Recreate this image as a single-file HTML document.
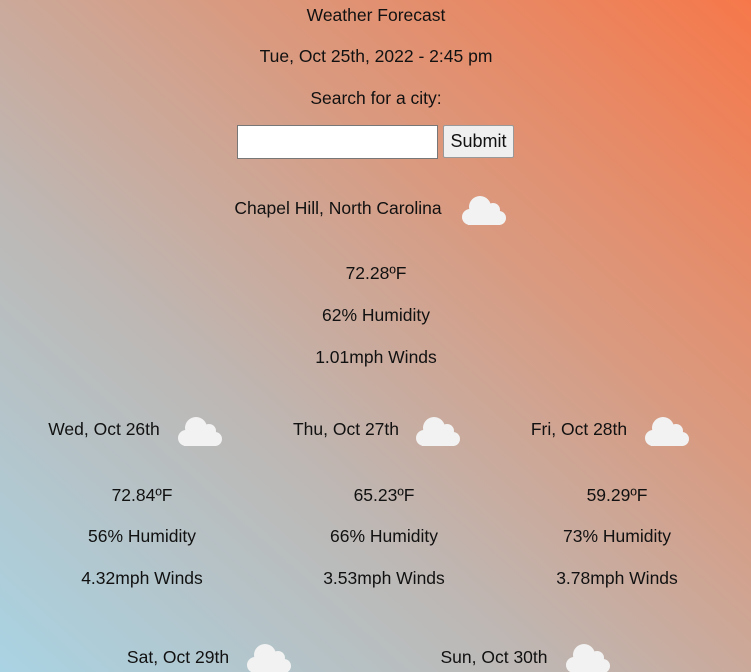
<!DOCTYPE html>
<html><head><style>
html,body{margin:0;padding:0;width:751px;height:672px;overflow:hidden}
body{background:linear-gradient(to top right,#a9d3e3 0%,#bdb8b5 35%,#d99a80 65%,#f6784a 100%);font-family:"Liberation Sans",sans-serif;font-size:17.5px;color:#111;position:relative}
.t{position:absolute;white-space:nowrap;transform:translateX(-50%)}
.c{position:absolute}
input{position:absolute;left:237px;top:125px;width:201px;height:34px;border:1px solid #777;background:#fff;padding:0;margin:0;box-sizing:border-box}
button{position:absolute;left:443px;top:125px;width:71px;height:33px;border:1px solid #999;border-radius:2px;background:#efefef;font-family:"Liberation Sans",sans-serif;font-size:18px;padding:0;color:#111}
</style></head><body>
<svg width="0" height="0" style="position:absolute"><defs><g id="cl" fill="#f2f2f2"><circle cx="18" cy="12" r="11"/><circle cx="31" cy="15" r="7"/><circle cx="8" cy="22" r="8"/><circle cx="37" cy="23" r="7"/><rect x="6" y="16" width="32" height="14"/></g></defs></svg>
<div class="t" style="left:376px;top:5px">Weather Forecast</div>
<div class="t" style="left:376px;top:46px">Tue, Oct 25th, 2022 - 2:45 pm</div>
<div class="t" style="left:376px;top:88px">Search for a city:</div>
<input type="text"><button>Submit</button>
<div class="t" style="left:338px;top:198px">Chapel Hill, North Carolina</div>
<svg class="c" style="left:462px;top:195px" width="46" height="31"><use href="#cl"/></svg>
<div class="t" style="left:376px;top:263px">72.28ºF</div>
<div class="t" style="left:376px;top:305px">62% Humidity</div>
<div class="t" style="left:376px;top:347px">1.01mph Winds</div>

<div class="t" style="left:104px;top:419px">Wed, Oct 26th</div>
<svg class="c" style="left:178px;top:416px" width="46" height="31"><use href="#cl"/></svg>
<div class="t" style="left:142px;top:485px">72.84ºF</div>
<div class="t" style="left:142px;top:526px">56% Humidity</div>
<div class="t" style="left:142px;top:568px">4.32mph Winds</div>

<div class="t" style="left:346px;top:419px">Thu, Oct 27th</div>
<svg class="c" style="left:416px;top:416px" width="46" height="31"><use href="#cl"/></svg>
<div class="t" style="left:384px;top:485px">65.23ºF</div>
<div class="t" style="left:384px;top:526px">66% Humidity</div>
<div class="t" style="left:384px;top:568px">3.53mph Winds</div>

<div class="t" style="left:579px;top:419px">Fri, Oct 28th</div>
<svg class="c" style="left:645px;top:416px" width="46" height="31"><use href="#cl"/></svg>
<div class="t" style="left:617px;top:485px">59.29ºF</div>
<div class="t" style="left:617px;top:526px">73% Humidity</div>
<div class="t" style="left:617px;top:568px">3.78mph Winds</div>

<div class="t" style="left:178px;top:647px">Sat, Oct 29th</div>
<svg class="c" style="left:247px;top:643px" width="46" height="31"><use href="#cl"/></svg>
<div class="t" style="left:494px;top:647px">Sun, Oct 30th</div>
<svg class="c" style="left:566px;top:643px" width="46" height="31"><use href="#cl"/></svg>
</body></html>
